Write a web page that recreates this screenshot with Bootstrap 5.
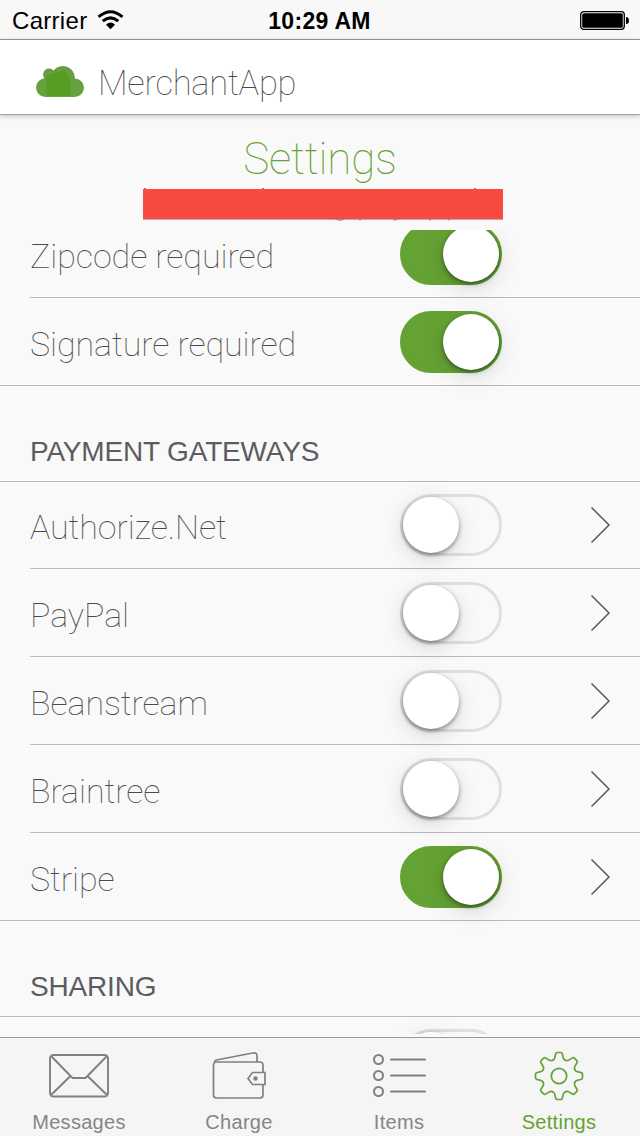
<!DOCTYPE html>
<html lang="en">
<head>
<meta charset="utf-8">
<meta name="viewport" content="width=device-width, initial-scale=1">
<title>MerchantApp Settings</title>
<link href="https://cdn.jsdelivr.net/npm/bootstrap@5.3.0/dist/css/bootstrap.min.css" rel="stylesheet">
<style>
  body { background: #f9f9f9; font-family: Roboto, sans-serif; color: #4a4a4a; overflow: hidden; }
  svg { display: block; flex: none; }
  .screen { width: 640px; height: 1136px; overflow: hidden; }
  .statusbar { height: 40px; background: #f8f8f8; border-bottom: 1px solid #999; font: 24px/40px "Liberation Sans", Arial, sans-serif; color: #000; padding: 2px 11px 0 12px; }
  .carrier { letter-spacing: .3px; }
  .clock { font-weight: 700; font-size: 23px; letter-spacing: .3px; margin-right: 2px; }
  .brandbar { height: 75px; background: #fff; border-bottom: 1px solid #a2a2a2; box-shadow: 0 1px 5px rgba(0,0,0,.22); padding: 7px 0 0 36px; position: relative; z-index: 1; }
  .brandname { font-weight: 100; font-size: 34.5px; line-height: 68px; margin: 4px 0 0 14px; letter-spacing: -.25px; }
  .heading { height: 115px; }
  .heading h1 { font-weight: 100; font-size: 44px; line-height: 52px; color: #64a233; padding-top: 18px; margin: 0; letter-spacing: -.2px; }
  .account { margin: 2px 0 0 143px; }
  .options { height: 804px; overflow: hidden; }
  .option { height: 88px; padding-left: 30px; }
  .option > div { height: 100%; border-bottom: 1px solid #b9b9bd; padding-right: 30px; }
  .option.final { padding-left: 0; }
  .option.final > div { padding-left: 30px; }
  .option.top { height: 87px; }
  .option.top .caption { padding-top: 4px; }
  .clipped { margin-top: -20px; }
  .caption { width: 370px; font-weight: 100; font-size: 34px; line-height: 40px; padding-top: 5px; letter-spacing: -.06px; }
  .toggle { width: 102px; height: 62px; border-radius: 31px; border: 3px solid #dfdfdf; flex: none; }
  .toggle::before { content: ""; display: block; width: 56px; height: 56px; border-radius: 50%; background: #fff; box-shadow: 0 2px 4px rgba(0,0,0,.42), 0 6px 22px rgba(0,0,0,.14); }
  .toggle.on { background: #64a233; border-color: #64a233; }
  .toggle.on::before { margin-left: 40px; }
  .group-title { height: 96px; border-bottom: 1px solid #b9b9bd; padding: 49px 30px 0; font: 28px/34px "Liberation Sans", Arial, sans-serif; color: #5c5c60; letter-spacing: -.17px; }
  .tabs { height: 99px; margin-top: 3px; background: #f5f5f5; border-top: 1px solid #999; font: 20px/24px "Liberation Sans", Arial, sans-serif; color: #858585; letter-spacing: .3px; }
  .tab { width: 160px; padding: 9px 2px 0 0; }
  .tab svg { margin-bottom: 5px; }
  .tab.chosen { color: #64a233; }
</style>
</head>
<body>
<div class="screen d-flex flex-column">
  <header class="statusbar d-flex flex-none align-items-center">
    <div class="col d-flex align-items-center"><span class="carrier">Carrier</span>
      <svg class="ms-2" width="32" height="22" viewBox="0 0 32 22" style="margin-top:-2px"><g transform="translate(2.500 1.600)"><path d="M1 6.300Q13 -4 25 6.300M5.200 10.600Q13 4 20.800 10.600" fill="none" stroke="#000" stroke-width="3"/><path d="M8.500 14.200Q13 9.800 17.500 14.200L13 18.600Z"/></g></svg>
    </div>
    <div class="clock">10:29 AM</div>
    <div class="col d-flex justify-content-end"><svg width="49" height="19" viewBox="0 0 49 19"><rect x=".7" y=".7" width="43.6" height="17.6" rx="3" fill="none" stroke="#000" stroke-width="1.3"/><rect x="2.2" y="2.2" width="40.6" height="14.6" rx="1.6"/><path d="M46 6h1q2 .5 2 3.5T47 13h-1z"/></svg></div>
  </header>

  <nav class="brandbar d-flex align-items-center">
    <svg width="48" height="32" viewBox="0 0 48 32"><defs><linearGradient id="leaf" x2="0" y2="1"><stop stop-color="#689b45"/><stop offset="1" stop-color="#67a23b"/></linearGradient></defs><path d="M9.500 32A9.500 9.500 0 0 1 0 22.500A9.500 9.500 0 0 1 8.500 13.300A5.800 5.800 0 0 1 17.500 5.600A12 12 0 0 1 38.900 13.400A9.500 9.500 0 0 1 48 22.700A9.300 9.300 0 0 1 38.700 32Z" fill="url(#leaf)"/><path d="M10.500 29V13Q10.500 10 13.500 9.500L28 5.500Q30 5 31 8L33 11.500Q34.500 12.500 34.500 15V28Q34.500 31 31.500 31H12.500Q10.500 31 10.500 29Z" fill="#519c1b" opacity=".8"/></svg>
    <div class="brandname">MerchantApp</div>
  </nav>

  <section class="heading">
    <h1 class="text-center">Settings</h1>
    <svg class="account" width="360" height="34" viewBox="0 0 360 34"><path d="M2.5 1v2M120.5 1v2M332.5 1v2M217.500 31.500V33.500M287.500 31.500V33.500M306.500 31.500V33.500M251 33q4 0 5.500-2M191 31q6 4 13 0" transform="translate(-.5 0)" fill="none" stroke="#444" stroke-width="1.200"/><rect y="2" width="360" height="30" fill="#f84a3f"/><rect y="32" width="360" height="1" fill="#a99" opacity=".8"/></svg>
  </section>

  <main class="options">
    <div class="option clipped"><div class="d-flex align-items-center"><span class="caption">Zipcode required</span><span class="toggle on"></span></div></div>
    <div class="option final"><div class="d-flex align-items-center"><span class="caption">Signature required</span><span class="toggle on"></span></div></div>
    <h2 class="group-title m-0">PAYMENT GATEWAYS</h2>
    <div class="option top"><div class="d-flex align-items-center"><span class="caption">Authorize.Net</span><span class="toggle"></span><svg class="ms-auto" width="20" height="38"><path d="M1.500 1.500 19 19 1.500 36.500" fill="none" stroke="#555" stroke-width="1.500"/></svg></div></div>
    <div class="option"><div class="d-flex align-items-center"><span class="caption">PayPal</span><span class="toggle"></span><svg class="ms-auto" width="20" height="38"><path d="M1.500 1.500 19 19 1.500 36.500" fill="none" stroke="#555" stroke-width="1.500"/></svg></div></div>
    <div class="option"><div class="d-flex align-items-center"><span class="caption">Beanstream</span><span class="toggle"></span><svg class="ms-auto" width="20" height="38"><path d="M1.500 1.500 19 19 1.500 36.500" fill="none" stroke="#555" stroke-width="1.500"/></svg></div></div>
    <div class="option"><div class="d-flex align-items-center"><span class="caption">Braintree</span><span class="toggle"></span><svg class="ms-auto" width="20" height="38"><path d="M1.500 1.500 19 19 1.500 36.500" fill="none" stroke="#555" stroke-width="1.500"/></svg></div></div>
    <div class="option final"><div class="d-flex align-items-center"><span class="caption">Stripe</span><span class="toggle on"></span><svg class="ms-auto" width="20" height="38"><path d="M1.500 1.500 19 19 1.500 36.500" fill="none" stroke="#555" stroke-width="1.500"/></svg></div></div>
    <h2 class="group-title m-0">SHARING</h2>
    <div class="option top"><div class="d-flex align-items-center"><span class="caption"></span><span class="toggle"></span></div></div>
  </main>

  <footer class="tabs d-flex">
    <div class="tab d-flex flex-column align-items-center">
      <svg width="62" height="58" viewBox="0 0 62 58"><g fill="none" stroke="#808080" stroke-width="1.900" transform="translate(1 0)"><rect x="1" y="8" width="58" height="41.500" rx="3.500"/><path d="M2 9 23.500 31H36.500L58 9M2 48 21.500 29M58 48 38.500 29"/></g></svg>
      <span>Messages</span>
    </div>
    <div class="tab d-flex flex-column align-items-center">
      <svg width="56" height="58" viewBox="0 0 56 58"><g fill="none" stroke="#808080" stroke-width="1.700" transform="translate(.5 0)"><path d="M51.500 26V18Q51.500 15 48.500 15H5Q2 15 2 18V48Q2 51 5 51H48.500Q51.500 51 51.500 48V37"/><path d="M3 15 Q3 13.500 5 13L41 6Q45.500 5 45.500 9V15"/><path d="M53.500 25.500H41L36.500 31.500 41 37.500H53.500Z"/></g><circle cx="44.500" cy="31.500" r="2.200" fill="#808080"/></svg>
      <span>Charge</span>
    </div>
    <div class="tab d-flex flex-column align-items-center">
      <svg width="54" height="58" viewBox="0 0 54 58"><g fill="none" stroke="#808080" stroke-width="2"><circle cx="6.500" cy="12.500" r="4.500"/><circle cx="6.500" cy="28.500" r="4.500"/><circle cx="6.500" cy="44.500" r="4.500"/><path d="M19 12.500h34M19 28.500h34M19 44.500h34" stroke-linecap="round"/></g></svg>
      <span>Items</span>
    </div>
    <div class="tab chosen d-flex flex-column align-items-center">
      <svg width="52" height="58" viewBox="-26 -29 52 58"><defs><path id="tooth" d="M-6.500 -15.700Q-4.600 -16.400 -4.300 -18.200L-3.300 -22.300Q-3 -23.500 -1.800 -23.500H1.800Q3 -23.500 3.300 -22.300L4.300 -18.200Q4.600 -16.400 6.500 -15.700"/></defs><g fill="none" stroke="#64a233" stroke-width="1.700" stroke-linecap="round"><circle r="7.700"/><use href="#tooth"/><use href="#tooth" transform="rotate(45)"/><use href="#tooth" transform="rotate(90)"/><use href="#tooth" transform="rotate(135)"/><use href="#tooth" transform="rotate(180)"/><use href="#tooth" transform="rotate(225)"/><use href="#tooth" transform="rotate(270)"/><use href="#tooth" transform="rotate(315)"/></g></svg>
      <span>Settings</span>
    </div>
  </footer>
</div>
<script src="https://cdn.jsdelivr.net/npm/bootstrap@5.3.0/dist/js/bootstrap.bundle.min.js"></script>
</body>
</html>
